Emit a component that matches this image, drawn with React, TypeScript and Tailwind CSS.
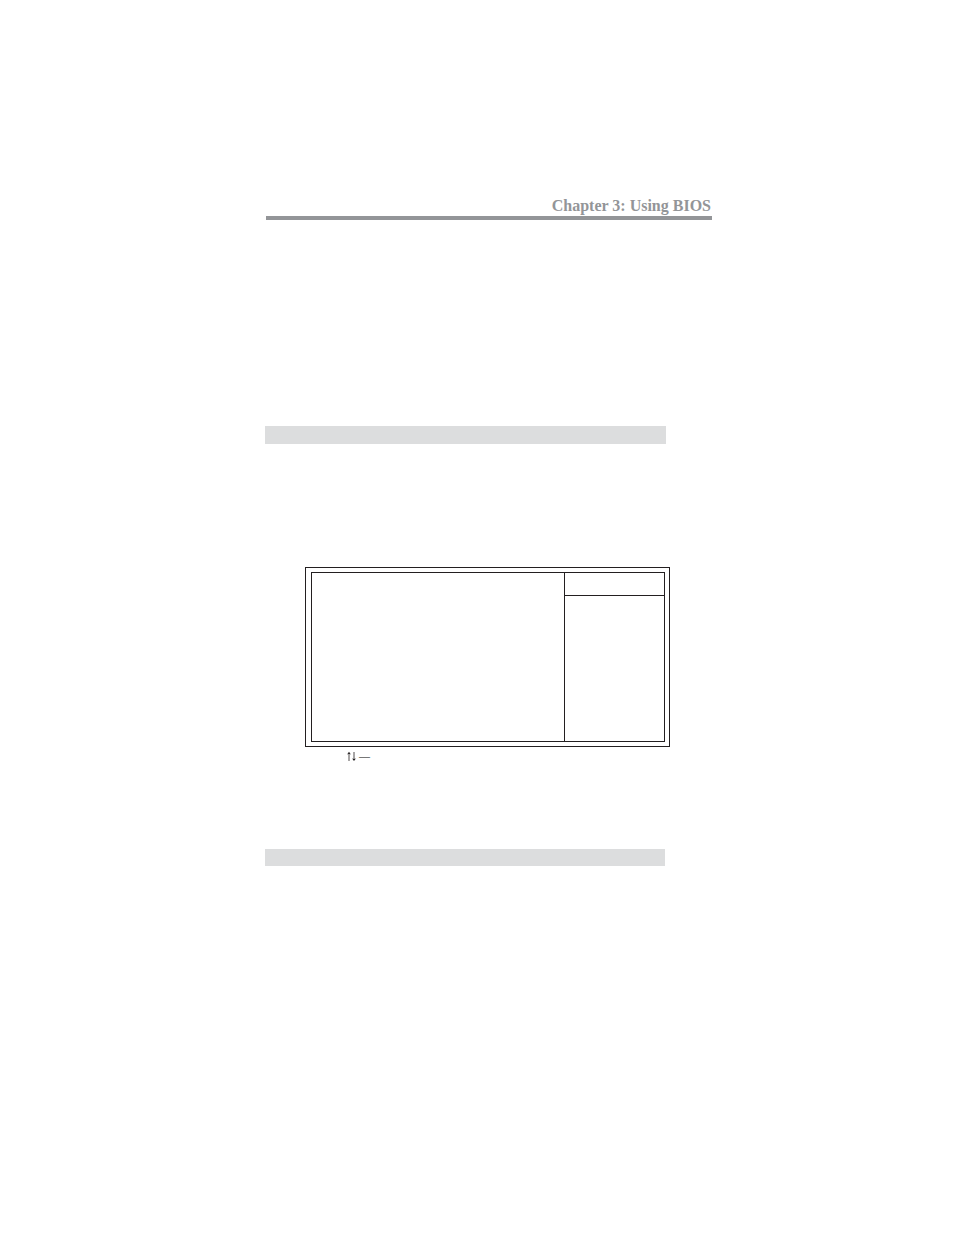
import React from 'react';

const SetupScreen: React.FC = () => (
  <section className="ml-10 mr-[42px]">
    {/* Double frame around the menu area */}
    <div className="border border-[#231f20] py-1 pl-[5px] pr-1">
      <div className="flex min-h-[170px] border border-[#231f20]">
        <div className="flex-1" />

        {/* Help column */}
        <div className="flex w-[100px] flex-col border-l border-[#231f20]">
          <div className="h-[23px] border-b border-[#231f20]" />
          <div className="flex-1" />
        </div>
      </div>
    </div>

    {/* Key legend */}
    <div className="flex items-center gap-[2px] pl-[42px] pt-px text-[#231f20]">
      <svg className="h-[10px] w-[10px]" viewBox="0 0 10 10" aria-hidden="true">
        <path d="M2 2V10M7 1V9" stroke="currentColor" strokeWidth="0.8" fill="none" />
        <path d="M2 0.8L3.9 3.4L2 2.8L0.1 3.4ZM7 10L8.9 7.4L7 8L5.1 7.4Z" fill="currentColor" />
      </svg>
      <span className="text-[11px] leading-4 font-bold text-black">—</span>
    </div>
  </section>
);

const App: React.FC = () => {
  return (
    <main className="min-h-screen bg-white pt-[196px] pb-16 pl-[265px] pr-[242px] font-['Liberation_Serif',serif]">
      <header className="ml-px border-b-4 border-[#939598] text-right">
        <h1 className="pr-px text-base leading-5 font-bold whitespace-nowrap text-[#939598]">
          Chapter 3: Using BIOS
        </h1>
      </header>

      <div className="mt-[206px] mr-[46px] h-[18px] bg-[#dcddde]" />

      <div className="mt-[123px]">
        <SetupScreen />
      </div>

      <div className="mt-[85px] mr-[47px] h-[17px] bg-[#dcddde]" />
    </main>
  );
};

export default App;
